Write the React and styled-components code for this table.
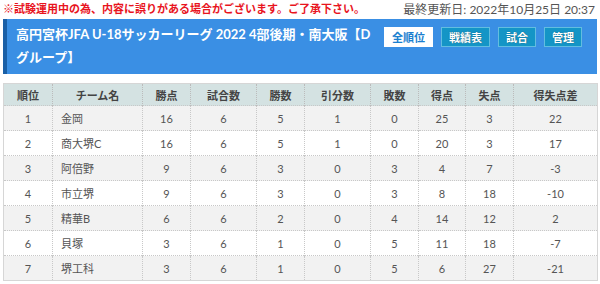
import React from 'react';
import styled, { createGlobalStyle } from 'styled-components';

const GlobalStyle = createGlobalStyle`
  body {
    margin: 0;
    background: #fff;
    font-family: "Lato", "Noto Sans CJK JP", sans-serif;
  }
`;

const Page = styled.div`
  width: 600px;
  padding: 0 3px;
  box-sizing: border-box;
`;

const TopLine = styled.div`
  display: flex;
  justify-content: space-between;
  align-items: center;
  height: 16px;
  padding-right: 2px;
`;

const Notice = styled.span`
  color: #e8141e;
  font-size: 11px;
  font-weight: bold;
`;

const Updated = styled.span`
  color: #555;
  font-size: 12px;
`;

const Header = styled.div`
  margin-top: 3px;
  display: flex;
  align-items: flex-start;
  background-color: #3a8fe4;
  border-left: 4px solid #1a5fa6;
  padding: 4px 15px 5px 9px;
`;

const Title = styled.h1`
  flex: 1;
  margin: 0;
  padding-right: 12px;
  color: #fff;
  font-size: 13px;
  font-weight: bold;
  line-height: 23px;
`;

const Buttons = styled.div`
  display: flex;
  gap: 8px;
  margin-top: 4px;
  flex-shrink: 0;
`;

const Button = styled.a`
  display: flex;
  align-items: center;
  height: 20px;
  padding: 0 7px;
  box-sizing: border-box;
  font-size: 11px;
  font-weight: bold;
  text-decoration: none;
  background-color: ${(p) => (p.$active ? '#fff' : '#1495c6')};
  color: ${(p) => (p.$active ? '#1a7fcf' : '#fff')};
  border: 1px solid ${(p) => (p.$active ? '#fff' : '#62bde0')};
  text-shadow: ${(p) => (p.$active ? 'none' : '0 0 1px rgba(0, 0, 0, 0.5)')};
`;

const Table = styled.table`
  margin-top: 9px;
  width: 594px;
  border-collapse: collapse;
  table-layout: fixed;
  border: 1px solid #d6d6d6;
`;

const Th = styled.th`
  height: 21px;
  padding: 0;
  background-color: #d4e2e2;
  color: #444;
  font-size: 11px;
  font-weight: bold;
  text-align: center;
  border-left: 1px dotted #bbb;
  &:first-child {
    border-left: none;
  }
`;

const Row = styled.tr`
  background-color: ${(p) => (p.$odd ? '#f2f2f2' : '#fff')};
  border-top: 1px dotted #c8c8c8;
`;

const Td = styled.td`
  height: 24px;
  padding: 0 ${(p) => (p.$left ? '8px' : '0')};
  color: #555;
  font-size: 11px;
  text-align: ${(p) => (p.$left ? 'left' : 'center')};
  border-left: 1px dotted #c8c8c8;
  &:first-child {
    border-left: none;
  }
`;

const columns = [
  { label: '順位', width: 49 },
  { label: 'チーム名', width: 90 },
  { label: '勝点', width: 48 },
  { label: '試合数', width: 66 },
  { label: '勝数', width: 48 },
  { label: '引分数', width: 66 },
  { label: '敗数', width: 48 },
  { label: '得点', width: 47 },
  { label: '失点', width: 48 },
  { label: '得失点差', width: 84 },
];

const standings = [
  [1, '金岡', 16, 6, 5, 1, 0, 25, 3, 22],
  [2, '商大堺C', 16, 6, 5, 1, 0, 20, 3, 17],
  [3, '阿倍野', 9, 6, 3, 0, 3, 4, 7, -3],
  [4, '市立堺', 9, 6, 3, 0, 3, 8, 18, -10],
  [5, '精華B', 6, 6, 2, 0, 4, 14, 12, 2],
  [6, '貝塚', 3, 6, 1, 0, 5, 11, 18, -7],
  [7, '堺工科', 3, 6, 1, 0, 5, 6, 27, -21],
];

const navItems = ['全順位', '戦績表', '試合', '管理'];

export default function App() {
  return (
    <Page>
      <GlobalStyle />
      <TopLine>
        <Notice>※試験運用中の為、内容に誤りがある場合がございます。ご了承下さい。</Notice>
        <Updated>最終更新日: 2022年10月25日 20:37</Updated>
      </TopLine>
      <Header>
        <Title>高円宮杯JFA U-18サッカーリーグ 2022 4部後期・南大阪【Dグループ】</Title>
        <Buttons>
          {navItems.map((item, i) => (
            <Button key={item} href="#" $active={i === 0}>
              {item}
            </Button>
          ))}
        </Buttons>
      </Header>
      <Table>
        <colgroup>
          {columns.map((c) => (
            <col key={c.label} style={{ width: c.width }} />
          ))}
        </colgroup>
        <thead>
          <tr>
            {columns.map((c) => (
              <Th key={c.label}>{c.label}</Th>
            ))}
          </tr>
        </thead>
        <tbody>
          {standings.map((row, i) => (
            <Row key={row[0]} $odd={i % 2 === 0}>
              {row.map((v, j) => (
                <Td key={j} $left={j === 1}>
                  {v}
                </Td>
              ))}
            </Row>
          ))}
        </tbody>
      </Table>
    </Page>
  );
}
